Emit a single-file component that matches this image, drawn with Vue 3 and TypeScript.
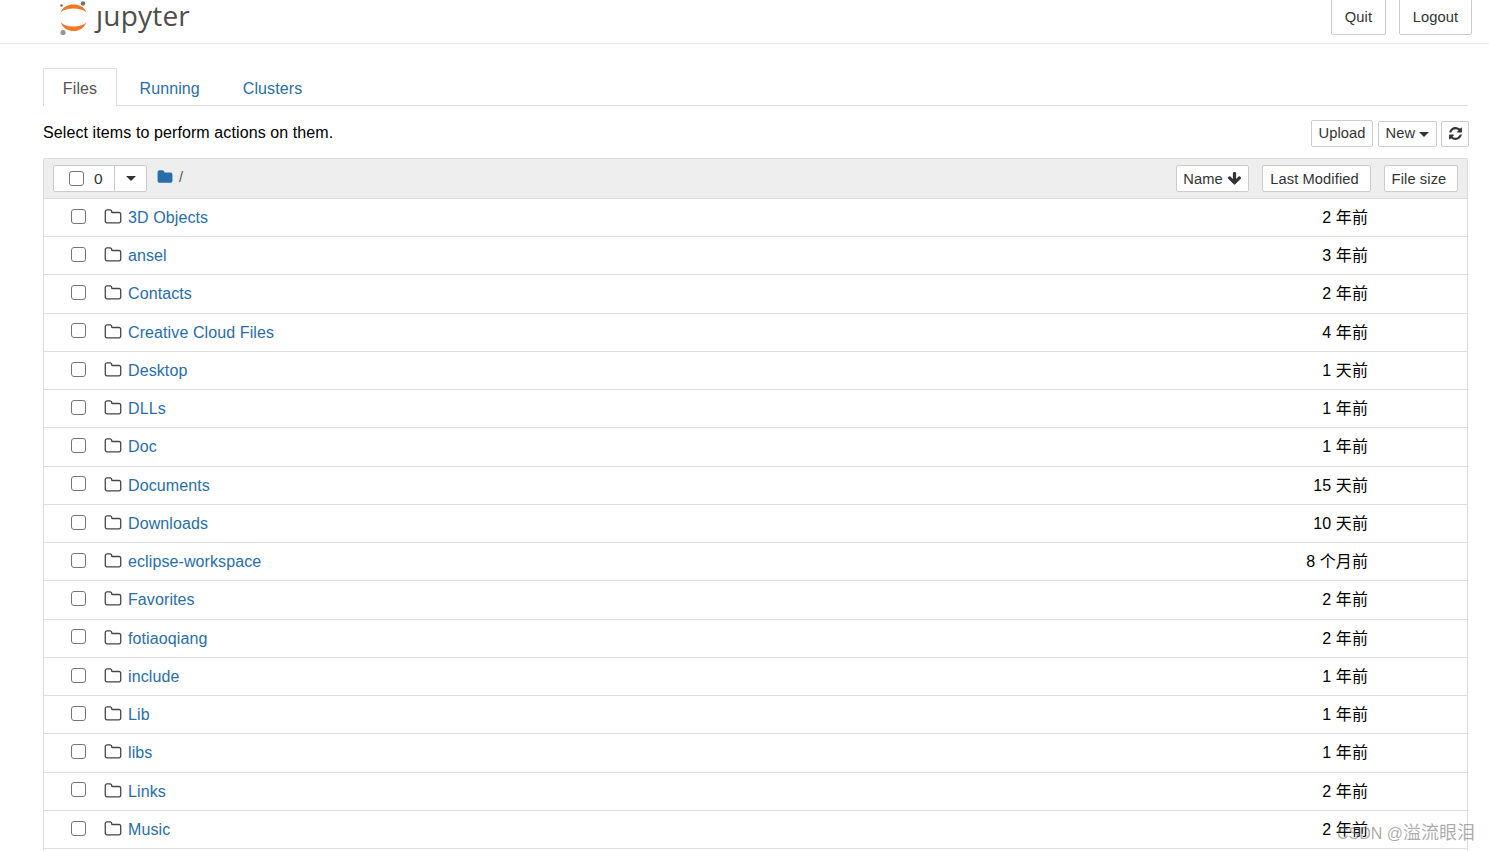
<script setup lang="ts">
interface Row { name: string; age: string }
const rows: Row[] = [
  { name: '3D Objects', age: '2 年前' },
  { name: 'ansel', age: '3 年前' },
  { name: 'Contacts', age: '2 年前' },
  { name: 'Creative Cloud Files', age: '4 年前' },
  { name: 'Desktop', age: '1 天前' },
  { name: 'DLLs', age: '1 年前' },
  { name: 'Doc', age: '1 年前' },
  { name: 'Documents', age: '15 天前' },
  { name: 'Downloads', age: '10 天前' },
  { name: 'eclipse-workspace', age: '8 个月前' },
  { name: 'Favorites', age: '2 年前' },
  { name: 'fotiaoqiang', age: '2 年前' },
  { name: 'include', age: '1 年前' },
  { name: 'Lib', age: '1 年前' },
  { name: 'libs', age: '1 年前' },
  { name: 'Links', age: '2 年前' },
  { name: 'Music', age: '2 年前' }
]
const folderO = 'M1600 1312v-704q0-40-28-68t-68-28h-704q-40 0-68-28t-28-68v-64q0-40-28-68t-68-28h-320q-40 0-68 28t-28 68v960q0 40 28 68t68 28h1216q40 0 68-28t28-68zm128-704v704q0 92-66 158t-158 66h-1216q-92 0-158-66t-66-158v-960q0-92 66-158t158-66h320q92 0 158 66t66 158v32h672q92 0 158 66t66 158z'
</script>

<template>
  <div class="page">
    <header class="top">
      <div class="logo">
        <svg class="mark" width="30" height="38" viewBox="0 0 30 38">
          <path d="M1.5 12.5C4 6.5 9 4.5 14.5 4.5S25 6.5 27.5 12.5C24 9.5 19.500 8.500 14.500 8.500S5 9.500 1.500 12.500Z" fill="#f37726" />
          <path d="M1.500 22C5 25.500 9.500 26.500 14.500 26.500S24 25.500 27.500 22C25 28.500 20 31 14.500 31S4 28.500 1.500 22Z" fill="#f37726" />
          <circle cx="24" cy="3.500" r="2.200" fill="#767677" />
          <circle cx="2.500" cy="5.500" r="1.300" fill="#767677" />
          <circle cx="4" cy="32.500" r="2.600" fill="#989798" />
        </svg>
        <div class="word-wrap">
          <span class="word">jupyter</span>
          <i class="dot-cover"></i>
        </div>
      </div>
      <div class="top-actions">
        <button class="btn top-btn quit">Quit</button>
        <button class="btn top-btn logout">Logout</button>
      </div>
    </header>

    <main class="main">
      <nav class="tabs">
        <a class="tab active">Files</a>
        <a class="tab">Running</a>
        <a class="tab">Clusters</a>
      </nav>

      <div class="toolbar">
        <span class="hint">Select items to perform actions on them.</span>
        <div class="tools">
          <button class="btn small upload">Upload</button>
          <button class="btn small new">New <i class="caret"></i></button>
          <button class="btn small refresh" aria-label="Refresh">
            <svg width="15" height="15" viewBox="0 0 1792 1792"><path fill="#333" d="M1639 1056q0 5-1 7-64 268-268 434.5t-478 166.5q-146 0-282.5-55t-243.5-157l-129 129q-19 19-45 19t-45-19-19-45v-448q0-26 19-45t45-19h448q26 0 45 19t19 45-19 45l-137 137q71 66 161 102t187 36q134 0 250-65t186-179q11-17 53-117 8-23 30-23h192q13 0 22.5 9.5t9.500 22.500zm25-800v448q0 26-19 45t-45 19h-448q-26 0-45-19t-19-45 19-45l138-138q-148-137-349-137-134 0-250 65t-186 179q-11 17-53 117-8 23-30 23h-199q-13 0-22.5-9.500t-9.500-22.500v-7q65-268 270-434.500t480-166.500q146 0 284 55.500t245 156.500l130-129q19-19 45-19t45 19 19 45z" /></svg>
          </button>
        </div>
      </div>

      <section class="list">
        <div class="list-head">
          <div class="select-group">
            <div class="select-left">
              <input class="check" type="checkbox" aria-label="Select all" />
              <span class="count">0</span>
            </div>
            <div class="select-right"><i class="caret"></i></div>
          </div>
          <a class="crumb">
            <svg width="16" height="16" viewBox="0 0 1792 1792"><path fill="#296eaa" d="M1728 608v704q0 92-66 158t-158 66h-1216q-92 0-158-66t-66-158v-960q0-92 66-158t158-66h320q92 0 158 66t66 158v32h672q92 0 158 66t66 158z" /></svg>
            <span class="slash">/</span>
          </a>
          <div class="sorts">
            <button class="btn head-btn name">Name
              <svg width="15" height="15" viewBox="0 0 1792 1792"><path fill="#333" d="M1675 832q0 53-37 90l-651 652q-39 37-91 37-53 0-90-37l-651-652q-38-36-38-90 0-53 38-91l74-75q39-37 91-37 53 0 90 37l294 294v-704q0-52 38-90t90-38h128q52 0 90 38t38 90v704l294-294q37-37 90-37 52 0 91 37l75 75q37 39 37 91z" /></svg>
            </button>
            <button class="btn head-btn modified">Last Modified</button>
            <button class="btn head-btn size">File size</button>
          </div>
        </div>
        <div v-for="row in rows" :key="row.name" class="row">
          <input class="check row-check" type="checkbox" :aria-label="row.name" />
          <svg class="folder" width="18" height="18" viewBox="0 0 1792 1792"><path fill="#444" :d="folderO" /></svg>
          <a class="name-link">{{ row.name }}</a>
          <span class="age">{{ row.age }}</span>
        </div>
      </section>
    </main>
    <div class="watermark"><span class="wm-latin">CSDN @</span>溢流眼泪</div>
  </div>
</template>

<style>
html, body { margin: 0; overflow: hidden; background: #fff; }
</style>

<style scoped>
.page {
  position: relative;
  height: 851px;
  overflow: hidden;
  font-family: "Liberation Sans", Arial, "Noto Sans CJK SC", sans-serif;
  font-size: 16px;
  letter-spacing: 0.1px;
  color: #000;
  background: #fff;
}
.top {
  height: 43px;
  display: flex;
  justify-content: space-between;
  align-items: flex-end;
  border-bottom: 1px solid #e7e7e7;
  padding: 0 17px 0 59px;
  overflow: hidden;
}
.logo { display: flex; align-items: flex-start; align-self: flex-start; }
.mark { display: block; }
.word-wrap { position: relative; margin-left: 7px; }
.word {
  display: block;
  font-family: "Open Sans", sans-serif;
  font-size: 28px;
  line-height: 30px;
  letter-spacing: 0.2px;
  color: #4e4e4e;
}
.dot-cover {
  position: absolute;
  left: -2px;
  top: 0;
  width: 10px;
  height: 10px;
  background: #fff;
}
.top-actions { display: flex; gap: 13px; margin-bottom: 8px; }
.btn {
  font-family: inherit;
  letter-spacing: inherit;
  background: #fff;
  border: 1px solid #ccc;
  border-radius: 2px;
  color: #333;
  padding: 0;
  box-sizing: border-box;
  font-size: 14.700px;
}
.top-btn { height: 44px; padding-top: 8px; }
.quit { width: 55px; }
.logout { width: 73px; }
.main { padding: 24px 21px 0 43px; }
.tabs {
  display: flex;
  height: 37px;
  border-bottom: 1px solid #ddd;
}
.tab {
  height: 37px;
  box-sizing: border-box;
  padding: 0 20.500px;
  line-height: 40px;
  color: #296eaa;
  border: 1px solid transparent;
  border-bottom: 0;
}
.active {
  width: 74px;
  padding: 0;
  text-align: center;
  color: #555;
  background: #fff;
  border-color: #ddd;
  border-radius: 2px 2px 0 0;
  height: 38px;
  margin-right: 1px;
}
.toolbar {
  display: flex;
  justify-content: space-between;
  align-items: flex-start;
  height: 52px;
  padding-top: 14px;
  box-sizing: border-box;
}
.hint { line-height: 25px; }
.tools { display: flex; align-items: flex-end; gap: 5px; margin-right: -1px; }
.small { height: 26px; padding-bottom: 2px; }
.upload { width: 62px; height: 27px; }
.new { width: 59px; }
.refresh { width: 28px; margin-left: -1px; display: flex; align-items: center; justify-content: center; }
.caret {
  display: inline-block;
  width: 0;
  height: 0;
  border-top: 5px solid #333;
  border-left: 5px solid transparent;
  border-right: 5px solid transparent;
  vertical-align: middle;
}
.list {
  border: 1px solid #ddd;
  border-bottom: 0;
  border-radius: 2px 2px 0 0;
  padding-bottom: 12px;
}
.list-head {
  background: #eee;
  display: flex;
  align-items: flex-start;
  padding: 6px 9px 0;
  border-bottom: 1px solid #ddd;
  height: 32.750px;
}
.select-group { display: flex; height: 27px; }
.select-left {
  width: 62px;
  box-sizing: border-box;
  background: #fff;
  border: 1px solid #ccc;
  border-radius: 2px 0 0 2px;
  display: flex;
  align-items: center;
  padding-left: 15px;
  gap: 10px;
  font-size: 15.500px;
  color: #333;
}
.select-right {
  width: 33px;
  margin-left: -1px;
  box-sizing: border-box;
  background: #fff;
  border: 1px solid #ccc;
  border-radius: 0 2px 2px 0;
  display: flex;
  align-items: center;
  justify-content: center;
}
.check {
  appearance: none;
  -webkit-appearance: none;
  margin: 0;
  width: 15px;
  height: 15px;
  box-sizing: border-box;
  border: 1.500px solid #767676;
  border-radius: 3px;
  background: #fff;
  flex: none;
}
.crumb { display: flex; align-items: center; margin-left: 10px; height: 24px; color: #296eaa; font-size: 14.700px; }
.slash { margin-left: 6px; color: #555; }
.sorts { margin-left: auto; display: flex; }
.head-btn { height: 27px; }
.name { width: 73px; display: flex; align-items: center; justify-content: center; gap: 4px; }
.modified { width: 109px; margin-left: 13px; padding-right: 4px; }
.size { width: 74px; margin-left: 13px; padding-right: 4px; }
.row {
  height: 38.250px;
  box-sizing: border-box;
  display: flex;
  align-items: center;
  border-bottom: 1px solid #ddd;
  padding-bottom: 2px;
}
.row-check { margin-left: 27px; margin-top: -0.500px; }
.folder { margin-left: 18px; margin-top: 1px; }
.name-link { margin-left: 6px; margin-top: 3px; color: #296eaa; }
.age { margin-left: auto; margin-right: 99px; margin-top: -1px; }
.watermark {
  position: absolute;
  right: 14px;
  top: 821px;
  font-size: 18px;
  line-height: 24px;
  letter-spacing: 0;
  color: rgba(100, 100, 100, 0.55);
  font-family: "Liberation Sans", "Noto Sans CJK SC", sans-serif;
}
.wm-latin { font-size: 16px; }
</style>
